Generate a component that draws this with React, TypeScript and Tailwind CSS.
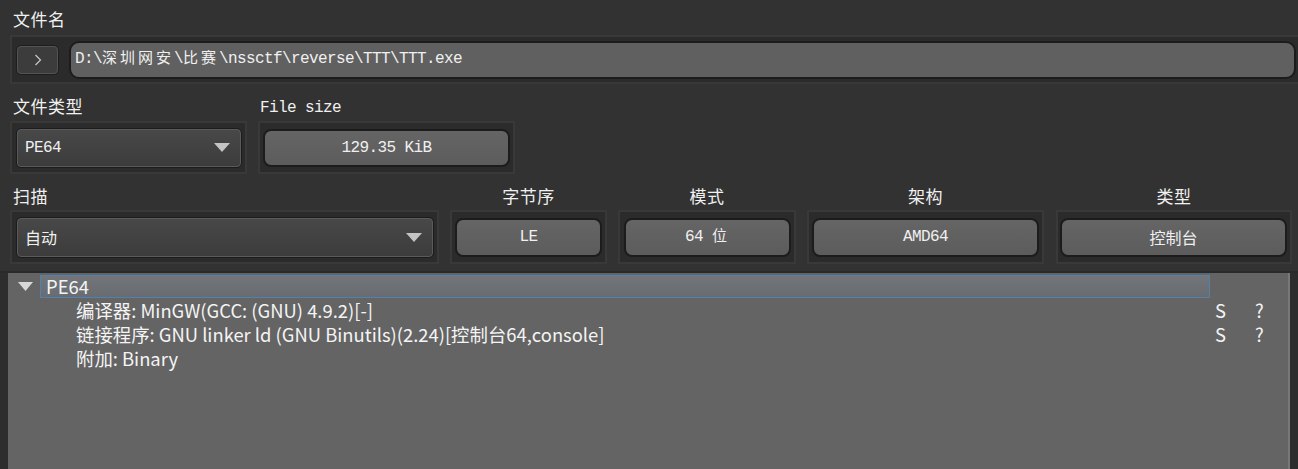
import React from "react";

const UI = "font-['Noto_Sans_CJK_SC','Noto_Sans',sans-serif]";
const MONO = "font-['Liberation_Mono','Noto_Sans_CJK_SC',monospace] text-[16px] tracking-[-0.6px]";

function Cjk({ children }: { children: React.ReactNode }) {
  return <span className="tracking-[3px] text-[15px]">{children}</span>;
}

function Frame({ w, h, children, className = "" }: { w: string; h: string; children: React.ReactNode; className?: string }) {
  return (
    <div className={`${w} ${h} shrink-0 border-2 border-[#393939] bg-[#2b2b2b] flex items-center ${className}`}>
      {children}
    </div>
  );
}

function Flat({ children, className = "" }: { children: React.ReactNode; className?: string }) {
  return (
    <div
      className={`flex items-center justify-center rounded-[8px] border-2 border-[#1c1c1c] bg-gradient-to-b from-[#656565] to-[#5c5c5c] text-[#f0f0f0] ${MONO} ${className}`}
    >
      {children}
    </div>
  );
}

function Combo({ label, className = "", mono = false }: { label: string; className?: string; mono?: boolean }) {
  return (
    <div className={`rounded-[5px] border border-[#1c1c1c] ${className}`}>
      <div className="h-full w-full rounded-[4px] border border-[#5a5a5a] bg-gradient-to-b from-[#484848] to-[#3c3c3c] flex items-center justify-between pl-[7px] pr-[10px]">
        <span className={`${mono ? MONO : UI + " text-[16px]"} text-[#f0f0f0]`}>{label}</span>
        <svg width="16" height="9" viewBox="0 0 16 9">
          <polygon points="0,0 16,0 8,9" fill="#c4c4c4" />
        </svg>
      </div>
    </div>
  );
}

function Label({ children, className = "" }: { children: React.ReactNode; className?: string }) {
  return <div className={`${UI} text-[17px] tracking-[0.5px] text-[#f0f0f0] leading-none ${className}`}>{children}</div>;
}

export default function App() {
  return (
    <div className={`w-[1298px] h-[469px] bg-[#323232] overflow-hidden ${UI}`}>
      <div className="pl-[10px]">
        {/* 文件名 */}
        <div className="h-[35px] flex items-center pl-[3px] pt-[2px]">
          <Label>文件名</Label>
        </div>
        <Frame w="w-[1300px]" h="h-[49px]" className="pl-[4px]">
          <div className="h-[30px] w-[43px] rounded-[5px] border border-[#1e1e1e] shrink-0">
            <div className="h-full w-full rounded-[4px] border border-[#535353] bg-[#3c3c3c] flex items-center justify-center">
              <svg width="8" height="12" viewBox="0 0 8 12">
                <polyline points="1.5,1 6.5,6 1.5,11" fill="none" stroke="#c8c8c8" strokeWidth="1.2" />
              </svg>
            </div>
          </div>
          <div
            className={`ml-[10px] h-[38px] w-[1227px] rounded-[10px] border-2 border-[#1c1c1c] bg-[#606060] flex items-center pl-[4px] text-[#f0f0f0] ${MONO}`}
          >
            <span>
              D:\<Cjk>深圳网安</Cjk>\<Cjk>比赛</Cjk>\nssctf\reverse\TTT\TTT.exe
            </span>
          </div>
        </Frame>

        {/* 文件类型 / File size */}
        <div className="h-[37px] flex items-center">
          <div className="w-[248px] pl-[3px] pt-[6px]">
            <Label>文件类型</Label>
          </div>
          <div className={`pl-[2px] pt-[10px] text-[#f0f0f0] ${MONO}`}>File size</div>
        </div>
        <div className="flex gap-[11px]">
          <Frame w="w-[237px]" h="h-[53px]" className="pl-[4px]">
            <Combo label="PE64" mono className="h-[40px] w-[226px]" />
          </Frame>
          <Frame w="w-[257px]" h="h-[53px]" className="pl-[3px]">
            <Flat className="h-[38px] w-[247px]">129.35 KiB</Flat>
          </Frame>
        </div>

        {/* 扫描 row */}
        <div className="flex gap-[11px]">
          <div className="w-[429px]">
            <div className="h-[36px] flex items-center pl-[3px] pt-[6px]">
              <Label>扫描</Label>
            </div>
            <Frame w="w-[429px]" h="h-[54px]" className="pl-[4px]">
              <Combo label="自动" className="h-[41px] w-[418px]" />
            </Frame>
          </div>
          <div className="w-[157px]">
            <div className="h-[36px] flex items-center justify-center pt-[6px]">
              <Label>字节序</Label>
            </div>
            <Frame w="w-[157px]" h="h-[54px]" className="pl-[3px]">
              <Flat className="h-[39px] w-[147px]">LE</Flat>
            </Frame>
          </div>
          <div className="w-[178px]">
            <div className="h-[36px] flex items-center justify-center pt-[6px]">
              <Label>模式</Label>
            </div>
            <Frame w="w-[178px]" h="h-[54px]" className="pl-[4px]">
              <Flat className="h-[39px] w-[167px]">
                <span>
                  64 <Cjk>位</Cjk>
                </span>
              </Flat>
            </Frame>
          </div>
          <div className="w-[237px]">
            <div className="h-[36px] flex items-center justify-center pt-[6px]">
              <Label>架构</Label>
            </div>
            <Frame w="w-[237px]" h="h-[54px]" className="pl-[3px]">
              <Flat className="h-[39px] w-[227px]">AMD64</Flat>
            </Frame>
          </div>
          <div className="w-[236px] ml-[1px]">
            <div className="h-[36px] flex items-center justify-center pt-[6px]">
              <Label>类型</Label>
            </div>
            <Frame w="w-[236px]" h="h-[54px]" className="pl-[2px]">
              <Flat className="h-[39px] w-[227px]">
                <span className={`${UI} text-[16px] tracking-normal`}>控制台</span>
              </Flat>
            </Frame>
          </div>
        </div>
      </div>

      {/* Tree */}
      <div className="mt-[7px] h-[300px] border-t-2 border-[#2a2a2a] bg-[#2d2d2d] flex">
        <div className="ml-[8px] w-[1282px] h-full bg-[#646464] border-r-2 border-[#787878] pt-[2px] text-[18.4px] text-[#f4f4f4]">
          <div className="h-[23px] flex items-center">
            <svg className="ml-[10px] shrink-0" width="15" height="9" viewBox="0 0 15 9">
              <polygon points="0,0 15,0 7.5,9" fill="#d8d8d8" />
            </svg>
            <div className="ml-[7px] h-[23px] w-[1170px] border border-[#5281ad] bg-gradient-to-b from-[#72767a] to-[#686c70] flex items-center pl-[5px]">
              PE64
            </div>
          </div>
          {[
            ["编译器: MinGW(GCC: (GNU) 4.9.2)[-]", true],
            ["链接程序: GNU linker ld (GNU Binutils)(2.24)[控制台64,console]", true],
            ["附加: Binary", false],
          ].map(([t, s], i) => (
            <div key={i} className="h-[24px] flex items-center pl-[68px]">
              <span className="flex-1 leading-none">{t as string}</span>
              {s ? (
                <>
                  <span className="w-[40px] leading-none">S</span>
                  <span className="w-[33px] leading-none">?</span>
                </>
              ) : null}
            </div>
          ))}
        </div>
      </div>
    </div>
  );
}
